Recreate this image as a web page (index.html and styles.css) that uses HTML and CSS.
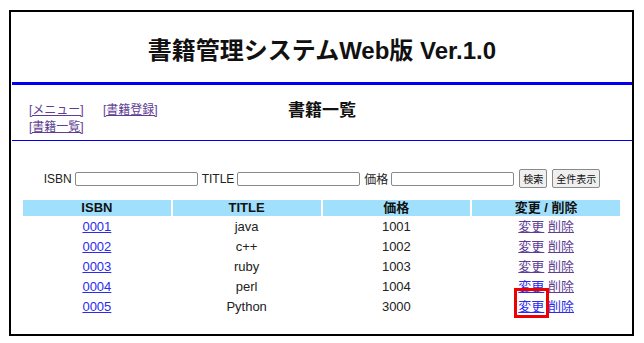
FILE: index.html
```html
<!doctype html>
<html>
<head>
	<meta charset="utf-8">
	<title>書籍一覧</title>
	<link rel="stylesheet" href="styles.css">
</head>
<body>
	<div class="frame">
		<div class="header">
			<h1>書籍管理システムWeb版 Ver.1.0</h1>
		</div>
		<div class="navbar">
			<div class="menu">
				<a href="#" class="visited">[メニュー]</a>
				<a href="#" class="visited">[書籍登録]</a>
				<a href="#" class="visited">[書籍一覧]</a>
			</div>
			<h2>書籍一覧</h2>
			<div></div>
		</div>

		<form class="search" action="#">
			<label>ISBN <input type="text" name="isbn"></label>
			<label>TITLE <input type="text" name="title"></label>
			<label>価格 <input type="text" name="price"></label>
			<span class="btns">
				<input type="submit" class="btn" value="検索">
				<input type="button" class="btn" value="全件表示">
			</span>
		</form>

		<table class="list">
			<tr>
				<th>ISBN</th>
				<th>TITLE</th>
				<th>価格</th>
				<th>変更 / 削除</th>
			</tr>
			<tr>
				<td><a href="#">0001</a></td>
				<td>java</td>
				<td>1001</td>
				<td><a href="#" class="visited">変更</a> <a href="#" class="visited">削除</a></td>
			</tr>
			<tr>
				<td><a href="#">0002</a></td>
				<td>c++</td>
				<td>1002</td>
				<td><a href="#" class="visited">変更</a> <a href="#" class="visited">削除</a></td>
			</tr>
			<tr>
				<td><a href="#">0003</a></td>
				<td>ruby</td>
				<td>1003</td>
				<td><a href="#" class="visited">変更</a> <a href="#" class="visited">削除</a></td>
			</tr>
			<tr>
				<td><a href="#">0004</a></td>
				<td>perl</td>
				<td>1004</td>
				<td><a href="#">変更</a> <a href="#" class="visited">削除</a></td>
			</tr>
			<tr>
				<td><a href="#">0005</a></td>
				<td>Python</td>
				<td>3000</td>
				<td><a href="#" class="marked">変更</a> <a href="#">削除</a></td>
			</tr>
		</table>
	</div>
</body>
</html>
```

FILE: styles.css
```css
	body {
		margin: 0;
		padding: 10px 9px 0;
		font-family: "Liberation Sans", "Noto Sans CJK JP", sans-serif;
		font-size: 13px;
		color: #222;
		background: #fff;
	}
	a {
		color: #2b2bee;
	}
	a.visited {
		color: #5e3d94;
	}
	.frame {
		width: 625px;
		height: 326px;
		border: 2px solid #000;
		box-sizing: border-box;
	}
	.header {
		height: 70px;
		display: flex;
		align-items: center;
		justify-content: center;
		border-bottom: 3px solid #0000ee;
		margin-left: 1px;
	}
	.header h1 {
		margin: 0;
		font-size: 24px;
		font-weight: bold;
		color: #111;
		padding-top: 3px;
	}
	.navbar {
		display: grid;
		grid-template-columns: 1fr auto 1fr;
		align-items: start;
		padding: 17px 17px 4px;
		border-bottom: 1px solid #0000ee;
		margin-left: 1px;
	}
	.menu {
		width: 150px;
		font-size: 12px;
		line-height: 17px;
	}
	.menu a {
		white-space: nowrap;
		margin-right: 16px;
	}
	.navbar h2 {
		margin: 0;
		font-size: 17px;
		line-height: 18px;
		font-weight: bold;
		color: #111;
	}
	.search {
		margin: 28px 0 0;
		display: flex;
		justify-content: center;
		align-items: center;
		gap: 4px;
		font-size: 12px;
		padding-left: 1px;
	}
	.search label {
		display: flex;
		align-items: center;
		gap: 3px;
	}
	.search input[type="text"] {
		width: 123px;
		height: 14px;
		padding: 0;
		border: 1px solid #8a8a8a;
		border-radius: 2px;
		box-sizing: border-box;
		margin: 0;
	}
	.btns {
		display: flex;
		gap: 5px;
		margin-left: 1px;
	}
	.btn {
		font-family: "Liberation Sans", "Noto Sans CJK JP", sans-serif;
		font-size: 10px;
		height: 19px;
		padding: 0 3px;
		margin: 0;
		background: #efefef;
		border: 1px solid #8a8a8a;
		border-radius: 2px;
		color: #111;
	}
	.list {
		width: 601px;
		margin: 10px auto 0;
		border-spacing: 2px;
		text-align: center;
	}
	.list th {
		width: 25%;
		background: #a0e0fc;
		height: 16px;
		padding: 0;
		font-size: 13px;
		line-height: 16px;
		color: #111;
	}
	.list td {
		height: 18px;
		padding: 0;
		line-height: 18px;
	}
	.marked {
		position: relative;
	}
	.marked::after {
		content: "";
		position: absolute;
		left: -4px;
		right: -5px;
		top: -11px;
		bottom: -4px;
		border: 3px solid #ee0000;
	}
```
